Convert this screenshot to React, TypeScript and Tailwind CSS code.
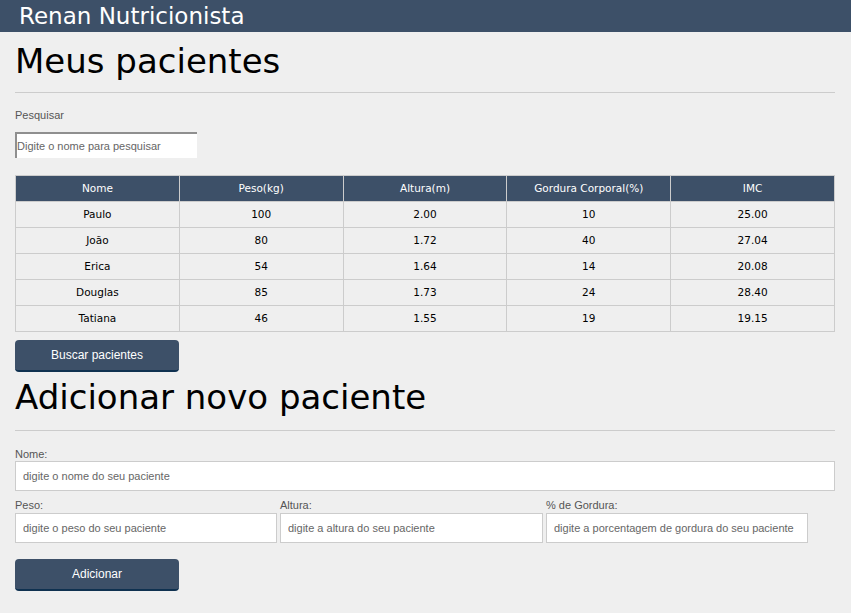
import React from "react";

const rows = [
  ["Paulo", "100", "2.00", "10", "25.00"],
  ["João", "80", "1.72", "40", "27.04"],
  ["Erica", "54", "1.64", "14", "20.08"],
  ["Douglas", "85", "1.73", "24", "28.40"],
  ["Tatiana", "46", "1.55", "19", "19.15"],
];
const heads = ["Nome", "Peso(kg)", "Altura(m)", "Gordura Corporal(%)", "IMC"];

const fields = [
  { l: "Peso:", p: "digite o peso do seu paciente", w: "w-[262px]" },
  { l: "Altura:", p: "digite a altura do seu paciente", w: "w-[263px]" },
  { l: "% de Gordura:", p: "digite a porcentagem de gordura do seu paciente", w: "w-[262px]" },
];

export default function App() {
  return (
    <div className="min-h-[613px] w-[851px] bg-[#efefef] text-black font-['Liberation_Sans',Arial,sans-serif]">
      <header className="h-[32px] bg-[#3d5068] flex items-center pl-[19px]">
        <span className="text-white text-[23px] leading-none font-['DejaVu_Sans','Noto_Sans',sans-serif]">
          Renan Nutricionista
        </span>
      </header>
      <main className="ml-[15px] w-[820px] flex flex-col">
        <h1 className="mt-[11px] h-[36px] text-[34px] leading-[36px] font-normal font-['DejaVu_Sans','Noto_Sans',sans-serif]">
          Meus pacientes
        </h1>
        <hr className="mt-[13px] border-0 h-px bg-[#cccccc]" />
        <label className="mt-[16px] text-[11px] leading-[13px] text-[#555]">Pesquisar</label>
        <input
          className="mt-[10px] block w-[182px] h-[26px] bg-white border-t-2 border-l-2 border-t-[#8f8f8f] border-l-[#8f8f8f] text-[11px] outline-none placeholder:text-[#666]"
          placeholder="Digite o nome para pesquisar"
        />
        <table className="mt-[17px] w-[820px] border-collapse table-fixed text-[10.5px] font-['DejaVu_Sans','Noto_Sans',sans-serif]">
          <thead>
            <tr className="bg-[#3d5068] text-white h-[26px]">
              {heads.map((h) => (
                <th key={h} className="border border-[#cccccc] p-0 font-normal text-center">
                  {h}
                </th>
              ))}
            </tr>
          </thead>
          <tbody>
            {rows.map((r) => (
              <tr key={r[0]} className="h-[26px]">
                {r.map((c, i) => (
                  <td key={i} className="border border-[#cccccc] p-0 text-center">
                    {c}
                  </td>
                ))}
              </tr>
            ))}
          </tbody>
        </table>
        <button className="mt-[8px] w-[164px] h-[32px] rounded-[4px] bg-[#3d5068] border-b-2 border-[#0f3150] text-white text-[12px]">
          Buscar pacientes
        </button>
        <h1 className="mt-[5px] h-[40px] text-[34px] leading-[40px] font-normal font-['DejaVu_Sans','Noto_Sans',sans-serif]">
          Adicionar novo paciente
        </h1>
        <hr className="mt-[13px] border-0 h-px bg-[#cccccc]" />
        <label className="mt-[17px] text-[11px] leading-[13px] text-[#555]">Nome:</label>
        <input
          className="block w-[820px] h-[30px] bg-white border border-[#cccccc] text-[11px] pl-[7px] outline-none placeholder:text-[#666]"
          placeholder="digite o nome do seu paciente"
        />
        <div className="flex gap-[3px] mt-[8px]">
          {fields.map((f) => (
            <div key={f.l} className={`${f.w} flex flex-col`}>
              <label className="text-[11px] leading-[13px] text-[#555] mb-[1px]">{f.l}</label>
              <input
                className="block w-full h-[30px] bg-white border border-[#cccccc] text-[11px] pl-[7px] outline-none placeholder:text-[#666]"
                placeholder={f.p}
              />
            </div>
          ))}
        </div>
        <button className="mt-[16px] w-[164px] h-[32px] rounded-[4px] bg-[#3d5068] border-b-2 border-[#0f3150] text-white text-[12px]">
          Adicionar
        </button>
      </main>
    </div>
  );
}
